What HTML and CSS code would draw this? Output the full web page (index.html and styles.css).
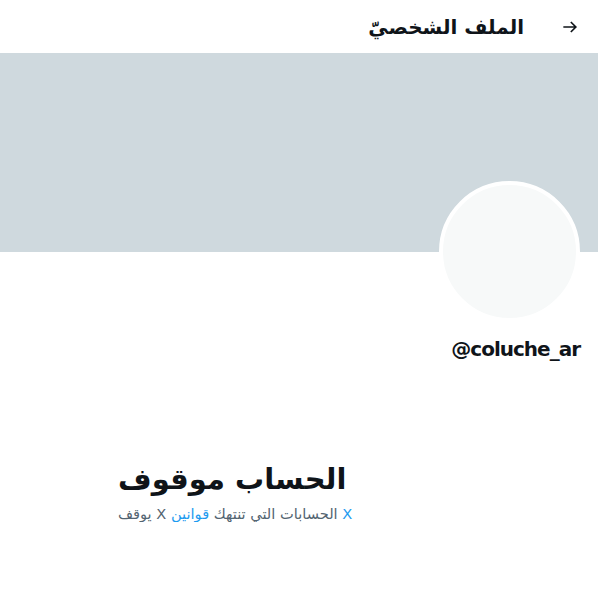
FILE: index.html
```html
<!DOCTYPE html>
<html lang="ar" dir="rtl">
  <head>
    <meta charset="UTF-8" />
    <meta name="viewport" content="width=device-width, initial-scale=1.0" />
    <title>الملف الشخصيّ</title>
    <link rel="stylesheet" href="styles.css">
  </head>
  <body>
    <div class="topbar">
      <div class="back">
        <svg viewBox="0 0 24 24" width="20" height="20">
          <path d="M4 12h15M13 6l6 6-6 6" fill="none" stroke="#0f1419" stroke-width="2" />
        </svg>
      </div>
      <h2 class="title">الملف الشخصيّ</h2>
    </div>

    <div class="banner"></div>

    <div class="profile">
      <div class="avatar"></div>
      <div class="handle" dir="ltr">@coluche_ar</div>
    </div>

    <div class="empty" dir="ltr">
      <h1>الحساب موقوف</h1>
      <p>يوقف X الحسابات التي تنتهك <a href="#">قوانين X</a></p>
    </div>
  </body>
</html>
```

FILE: styles.css
```css
body {
  margin: 0;
  background: #fff;
  font-family: "DejaVu Sans", sans-serif;
  color: #0f1419;
}

.topbar {
  height: 53px;
  display: flex;
  align-items: center;
  padding: 0 16px;
}

.back {
  width: 20px;
  height: 20px;
  margin-left: 36px;
  margin-right: 2px;
  display: flex;
}

.title {
  margin: 0;
  font-size: 20px;
  font-weight: bold;
}

.banner {
  height: 199px;
  background: #cfd9de;
}

.profile {
  padding: 0 18px 0 16px;
}

.avatar {
  width: 133px;
  height: 133px;
  margin-top: -71px;
  border: 4px solid #fff;
  border-radius: 50%;
  background: #f7f9f9;
}

.handle {
  margin-top: 15px;
  text-align: right;
  font-size: 20px;
  font-weight: bold;
  letter-spacing: -1px;
}

.empty {
  width: fit-content;
  margin: 98px auto 0 118px;
  text-align: left;
}

.empty h1 {
  margin: 0;
  font-size: 29px;
  font-weight: bold;
  line-height: 40px;
}

.empty p {
  margin: 6px 0 0;
  font-size: 14.6px;
  color: #536471;
}

.empty a {
  color: #1d9bf0;
  text-decoration: none;
}
```
